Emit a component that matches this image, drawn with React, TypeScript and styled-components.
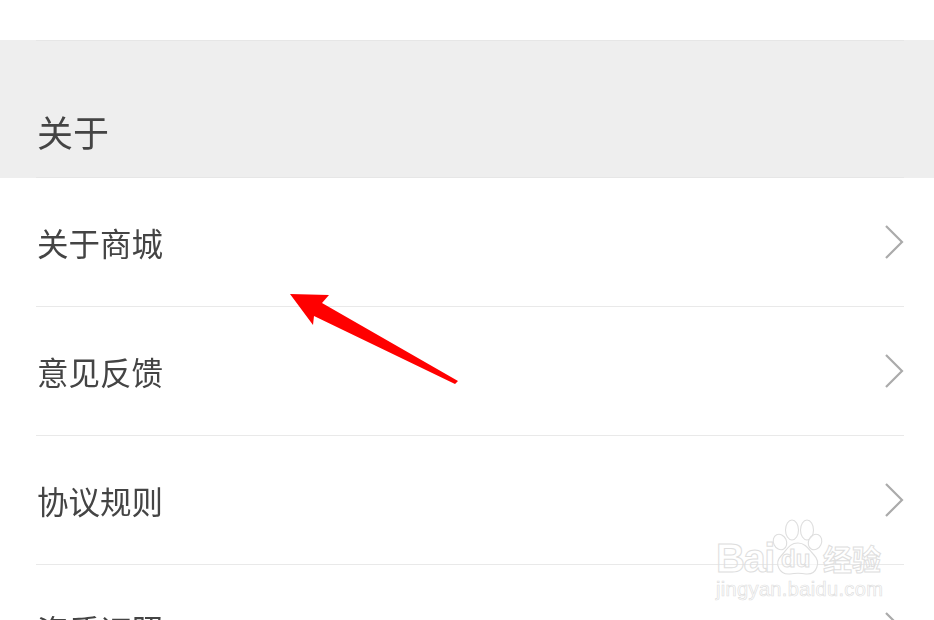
import styled, { createGlobalStyle } from "styled-components";

const GlobalStyle = createGlobalStyle`
  html, body {
    margin: 0;
    padding: 0;
    background: #fff;
  }
  body {
    font-family: "Noto Sans CJK SC", "Liberation Sans", sans-serif;
  }
`;

const Page = styled.div`
  position: relative;
  width: 934px;
  height: 620px;
  overflow: hidden;
  background: #fff;
`;

const TopGap = styled.div`
  height: 40px;
`;

const SectionHeader = styled.div`
  height: 138px;
  box-sizing: border-box;
  background: #eeeeee;
  padding: 0 30px 0 36px;
`;

const SectionInner = styled.div`
  height: 100%;
  box-sizing: border-box;
  border-top: 1px solid #e6e6e6;
  border-bottom: 1px solid #e6e6e6;
  display: flex;
  align-items: flex-end;
  padding: 0 0 22px 1px;
`;

const SectionTitle = styled.h2`
  margin: 0;
  font-size: 36px;
  line-height: 48px;
  font-weight: 400;
  color: #444;
  filter: blur(0.4px);
`;

const List = styled.div`
  display: flex;
  flex-direction: column;
`;

const Row = styled.div`
  flex: none;
  height: 129px;
  box-sizing: border-box;
  margin: 0 30px 0 36px;
  display: flex;
  align-items: center;
  justify-content: space-between;
  border-bottom: 1px solid #e9e9e9;
`;

const RowLabel = styled.span`
  padding-left: 1px;
  font-size: 31.5px;
  line-height: 44px;
  color: #444;
  filter: blur(0.4px);
`;

const Chevron = styled.svg`
  display: block;
  width: 20px;
  height: 36px;
  fill: none;
  stroke: #ababab;
  stroke-width: 2.2;
  filter: blur(0.3px);
`;

const Arrow = styled.svg`
  position: absolute;
  left: 280px;
  top: 285px;
  width: 190px;
  height: 110px;
`;

const Watermark = styled.div`
  position: absolute;
  left: 716px;
  top: 518px;
  width: 170px;
  display: flex;
  flex-direction: column;
  color: transparent;
  font-family: "Liberation Sans", sans-serif;
  -webkit-text-stroke: 1px #dedede;
`;

const MarkRow = styled.div`
  display: flex;
  align-items: flex-end;
  height: 56px;
`;

const MarkWord = styled.span`
  flex: none;
  width: 55px;
  margin-bottom: -3px;
  font-size: 40px;
  line-height: 38px;
  font-weight: 700;
  letter-spacing: -1.5px;
`;

const PawBox = styled.div`
  position: relative;
  flex: none;
  width: 52px;
  height: 56px;
`;

const PawSvg = styled.svg`
  position: absolute;
  inset: 0;
  overflow: visible;
  fill: rgba(255, 255, 255, 0.55);
  stroke: #dedede;
  stroke-width: 1.1;
`;

const PawWord = styled.span`
  position: absolute;
  left: 10px;
  bottom: 2px;
  font-size: 24px;
  line-height: 26px;
  font-weight: 700;
`;

const MarkCjk = styled.span`
  font-family: "Noto Sans CJK SC", sans-serif;
  font-size: 29px;
  line-height: 34px;
  font-weight: 700;
  margin-bottom: -1px;
`;

const Domain = styled.div`
  margin-top: 3px;
  font-size: 20px;
  line-height: 24px;
  letter-spacing: 0.35px;
  white-space: nowrap;
  -webkit-text-stroke: 0.7px #dfdfdf;
`;

const ROWS = ["关于商城", "意见反馈", "协议规则", "资质证照"];

const App = () => {
  return (
    <Page>
      <GlobalStyle />
      <TopGap />
      <SectionHeader>
        <SectionInner>
          <SectionTitle>关于</SectionTitle>
        </SectionInner>
      </SectionHeader>
      <List>
        {ROWS.map((label) => (
          <Row key={label}>
            <RowLabel>{label}</RowLabel>
            <Chevron viewBox="0 0 20 36">
              <path d="M2 2 L18 18 L2 34" />
            </Chevron>
          </Row>
        ))}
      </List>
      <Arrow viewBox="280 285 190 110">
        <path
          d="M290 294 L329 295 L322 303 L458 381 L455 384 L314 316 L313 325 Z"
          fill="#ff0000"
        />
      </Arrow>
      <Watermark>
        <MarkRow>
          <MarkWord>Bai</MarkWord>
          <PawBox>
            <PawSvg viewBox="0 0 52 56">
              <ellipse cx="21" cy="12" rx="6.5" ry="10" />
              <ellipse cx="36" cy="12" rx="6.5" ry="10" />
              <ellipse cx="9" cy="24" rx="6.5" ry="8" transform="rotate(-25 9 24)" />
              <ellipse cx="44" cy="24" rx="6.5" ry="8" transform="rotate(25 44 24)" />
              <path d="M27 25 C35 25 38 32 43 37 C50 44 46 57 35 56 C30 55 24 55 19 56 C8 57 3 45 10 38 C16 32 18 25 27 25 Z" />
            </PawSvg>
            <PawWord>du</PawWord>
          </PawBox>
          <MarkCjk>经验</MarkCjk>
        </MarkRow>
        <Domain>jingyan.baidu.com</Domain>
      </Watermark>
    </Page>
  );
};

export default App;
